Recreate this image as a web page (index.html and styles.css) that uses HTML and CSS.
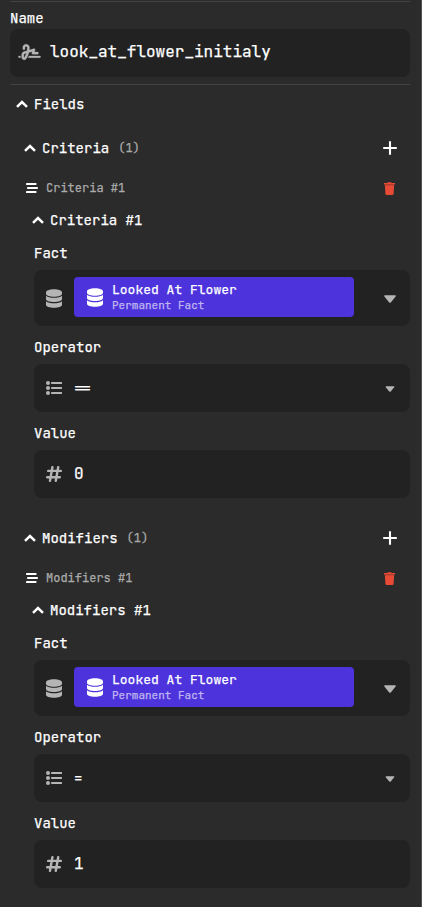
FILE: index.html
```
<!DOCTYPE html>
<html lang="en">
<head>
<meta charset="utf-8">
<title>Inspector</title>
<link rel="stylesheet" href="styles.css">
</head>
<body>
<svg width="0" height="0" class="defs">
  <symbol id="up" viewBox="0 0 12 8"><path d="M1 6.900 6 2l5 4.900" fill="none" stroke="currentColor" stroke-width="2.500"/></symbol>
  <symbol id="plus" viewBox="0 0 14 14"><path d="M7 .2v13.600M.2 7h13.600" stroke="currentColor" stroke-width="2.100"/></symbol>
  <symbol id="lines" viewBox="0 0 12 10"><path d="M.9 1h8.800M1.900 5h9.300M.9 9h8.800" stroke="currentColor" stroke-width="1.900" stroke-linecap="round"/></symbol>
  <symbol id="trash" viewBox="0 0 11 13"><path d="M0 1h3.200L4 .2h3l.8.800H11v1.400H0z" fill="currentColor"/><path d="M.8 2.200h9.400v1.800H.8z" fill="#b9402f"/><path d="M.9 3.600h9.200l-.5 8.200q-.1 1.200-1.100 1.200h-6q-1 0-1.100-1.200z" fill="currentColor"/></symbol>
  <symbol id="db" viewBox="0 0 16 19"><path d="M0 3.300C0 1.500 3.600.2 8 .2s8 1.300 8 3.100v1.400c0 1.800-3.600 3-8 3s-8-1.200-8-3zM0 6.700c1.600 1.400 4.700 2 8 2s6.400-.6 8-2v3.400c0 1.800-3.600 3-8 3s-8-1.200-8-3zM0 12.200c1.600 1.400 4.700 2 8 2s6.400-.6 8-2v3.500c0 1.800-3.600 3.100-8 3.100s-8-1.300-8-3.100z" fill="currentColor"/></symbol>
  <symbol id="list" viewBox="0 0 16 14"><path d="M6 2h9.200M6 7h9.200M6 12h9.200" stroke="currentColor" stroke-width="2.200" stroke-linecap="round"/><g fill="currentColor"><circle cx="2" cy="2" r="2"/><circle cx="2" cy="7" r="2"/><circle cx="2" cy="12" r="2"/></g></symbol>
  <symbol id="hash" viewBox="0 0 16 16"><path d="M6.400 1.200 4 14.800M12.200 1.200 9.800 14.800M2.200 4.900h12.600M1.200 11.200h12.600" fill="none" stroke="currentColor" stroke-width="2.400" stroke-linecap="round"/></symbol>
  <symbol id="down" viewBox="0 0 12 8"><path d="M.8.300h10.400q1 .2.400 1.200L7 7.200q-1 1-2 0L.4 1.500Q-.2.500.8.300z" fill="currentColor"/></symbol>
  <symbol id="sign" viewBox="0 0 640 512"><path fill="currentColor" stroke="currentColor" stroke-width="8" d="M192 128c0-17.700 14.300-32 32-32s32 14.300 32 32v7.800c0 27.700-2.400 55.300-7.100 82.500l-84.400 25.300c-40.600 12.200-68.400 49.600-68.400 92v71.900c0 40 32.500 72.500 72.500 72.500c26 0 50-13.900 62.900-36.500l13.900-24.300c26.800-47 46.500-97.700 58.400-150.500l94.400-28.300-12.500 37.500c-3.300 9.800-1.600 20.500 4.400 28.800s15.700 13.300 26 13.300H544c17.700 0 32-14.300 32-32s-14.300-32-32-32H460.400l18-53.900c3.800-11.300.9-23.800-7.400-32.400s-20.700-11.800-32.200-8.400L316.400 198.100c2.400-20.700 3.600-41.400 3.600-62.300V128c0-53-43-96-96-96s-96 43-96 96v32c0 17.700 14.300 32 32 32s32-14.300 32-32V128zm-9.200 177l49-14.700c-10.400 33.800-24.500 66.400-42.100 97.200l-13.900 24.300c-1.500 2.600-4.300 4.300-7.400 4.300c-4.700 0-8.500-3.800-8.500-8.500V335.600c0-14.100 9.300-26.600 22.800-30.700zM24 368c-13.300 0-24 10.700-24 24s10.700 24 24 24H64.300c-.2-2.800-.3-5.600-.3-8.500V368H24zm592 48c13.300 0 24-10.700 24-24s-10.700-24-24-24H305.900c-6.700 16.300-14.200 32.300-22.300 48H616z"/></symbol>
</svg>
<main class="panel">
  <section class="name">
    <label class="label">Name</label>
    <div class="box"><svg class="i-sign"><use href="#sign"/></svg><span>look_at_flower_initialy</span></div>
  </section>
  <div class="head head-root"><svg class="i-up"><use href="#up"/></svg>Fields</div>

  <section class="group">
    <div class="head head-group"><svg class="i-up"><use href="#up"/></svg>Criteria<span class="count">(1)</span><svg class="i-plus"><use href="#plus"/></svg></div>
    <div class="item"><svg class="i-lines"><use href="#lines"/></svg>Criteria #1<svg class="i-trash"><use href="#trash"/></svg></div>
    <div class="head head-item"><svg class="i-up"><use href="#up"/></svg>Criteria #1</div>
    <div class="fields">
      <label class="label">Fact</label>
      <div class="box fact"><svg class="i-db"><use href="#db"/></svg>
        <div class="chip"><svg class="i-db"><use href="#db"/></svg><div class="chip-text"><b>Looked At Flower</b><small>Permanent Fact</small></div></div>
        <svg class="i-down"><use href="#down"/></svg></div>
      <label class="label">Operator</label>
      <div class="box"><svg class="i-list"><use href="#list"/></svg><span class="op">==</span><svg class="i-down small"><use href="#down"/></svg></div>
      <label class="label">Value</label>
      <div class="box"><svg class="i-hash"><use href="#hash"/></svg><span>0</span></div>
    </div>
  </section>

  <section class="group">
    <div class="head head-group"><svg class="i-up"><use href="#up"/></svg>Modifiers<span class="count">(1)</span><svg class="i-plus"><use href="#plus"/></svg></div>
    <div class="item"><svg class="i-lines"><use href="#lines"/></svg>Modifiers #1<svg class="i-trash"><use href="#trash"/></svg></div>
    <div class="head head-item"><svg class="i-up"><use href="#up"/></svg>Modifiers #1</div>
    <div class="fields">
      <label class="label">Fact</label>
      <div class="box fact"><svg class="i-db"><use href="#db"/></svg>
        <div class="chip"><svg class="i-db"><use href="#db"/></svg><div class="chip-text"><b>Looked At Flower</b><small>Permanent Fact</small></div></div>
        <svg class="i-down"><use href="#down"/></svg></div>
      <label class="label">Operator</label>
      <div class="box"><svg class="i-list"><use href="#list"/></svg><span class="op">=</span><svg class="i-down small"><use href="#down"/></svg></div>
      <label class="label">Value</label>
      <div class="box"><svg class="i-hash"><use href="#hash"/></svg><span>1</span></div>
    </div>
  </section>
</main>
</body>
</html>
```
FILE: styles.css
```
* { box-sizing: border-box; }
body { margin: 0; background: #2b2b2b; }
.defs { display: block; height: 0; }
svg { flex: none; display: block; }
.panel {
  height: 907px;
  overflow: hidden;
  padding: 1px 11px 0 10px;
  border-right: 1px solid #505050;
  color: #fff;
  font: 400 14px/20px "JetBrains Mono", "DejaVu Sans Mono", monospace;
  -webkit-text-stroke: 0.25px;
  white-space: nowrap;
}
.name {
  height: 84px;
  border-top: 1px solid #434343;
  border-bottom: 1px solid #434343;
  padding-top: 6px;
}
.label { display: block; height: 20px; }
.name .label { height: 21px; }
.box {
  display: flex;
  align-items: center;
  height: 48px;
  padding: 0 14px 0 12px;
  border-radius: 8px;
  background: #222;
  font-size: 16px;
}
.box > svg { color: #b5b5b5; }
.name .box { padding-left: 8px; }
.i-sign { width: 23px; height: 18px; margin: -2px 9px 0 0; overflow: visible; }
.name .box span { position: relative; top: -1px; }
.head { display: flex; align-items: center; }
.i-up { width: 12px; height: 8px; margin-right: 6px; }
.head-root { height: 38px; padding-left: 6px; }
.group { height: 390px; }
.head-group { height: 50px; padding: 0 13px 0 14px; }
.count { margin-left: 9px; font-size: 12px; color: #aaa; }
.i-plus { width: 14px; height: 14px; margin-left: auto; }
.item { display: flex; align-items: center; height: 30px; padding: 0 15px 0 16px; font-size: 12px; color: #aaa; }
.i-lines { width: 12px; height: 10px; margin-right: 8px; color: #fff; }
.i-trash { width: 11px; height: 13px; margin-left: auto; color: #e84b35; }
.head-item { height: 34px; padding-left: 22px; }
.fields { padding-left: 24px; padding-top: 6px; }
.fields .label { height: 27px; line-height: 20px; }
.fields .box + .label { height: 38px; padding-top: 11px; }
.fields .box > span { margin-left: 12px; }
.fields .box .op { font-size: 14px; }
.fact.box { height: 56px; }
.i-db { width: 16px; height: 19px; }
.chip {
  display: flex;
  align-items: center;
  width: 280px;
  height: 40px;
  margin: -2px 0 0 12px;
  padding-left: 13px;
  border-radius: 4px;
  background: #4d33dc;
}
.chip-text { margin-left: 9px; }
.chip b, .chip small { display: block; font-weight: 400; line-height: 16px; }
.chip b { font-size: 13px; line-height: 17px; height: 16px; }
.chip small { font-size: 11px; color: #c0b7f2; }
.i-list { width: 16px; height: 14px; }
.i-hash { width: 16px; height: 16px; }
.i-down { width: 12px; height: 8px; margin-left: auto; position: relative; top: 1px; }
.i-down.small { width: 10px; height: 6px; margin-right: 1px; }
```
